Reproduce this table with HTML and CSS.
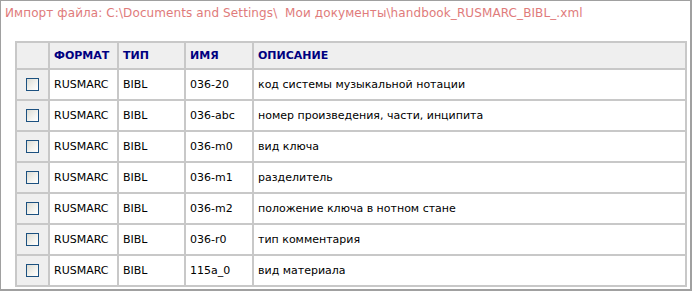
FILE: index.html
```html
<!DOCTYPE html>
<html lang="ru">
<head>
    <meta charset="UTF-8">
    <title>Импорт файла</title>
    <link rel="stylesheet" href="styles.css">
</head>
<body>

    <div class="import-panel">
        <div class="import-title">Импорт файла: C:\Documents and Settings\&nbsp; Мои документы\handbook_RUSMARC_BIBL_.xml</div>

        <table class="fields-table">
            <thead>
                <tr>
                    <th class="col-check"></th>
                    <th class="col-format">ФОРМАТ</th>
                    <th class="col-type">ТИП</th>
                    <th class="col-name">ИМЯ</th>
                    <th class="col-desc">ОПИСАНИЕ</th>
                </tr>
            </thead>
            <tbody>
                <tr>
                    <td class="col-check"><span class="checkbox"></span></td>
                    <td>RUSMARC</td>
                    <td>BIBL</td>
                    <td>036-20</td>
                    <td>код системы музыкальной нотации</td>
                </tr>
                <tr>
                    <td class="col-check"><span class="checkbox"></span></td>
                    <td>RUSMARC</td>
                    <td>BIBL</td>
                    <td>036-abc</td>
                    <td>номер произведения, части, инципита</td>
                </tr>
                <tr>
                    <td class="col-check"><span class="checkbox"></span></td>
                    <td>RUSMARC</td>
                    <td>BIBL</td>
                    <td>036-m0</td>
                    <td>вид ключа</td>
                </tr>
                <tr>
                    <td class="col-check"><span class="checkbox"></span></td>
                    <td>RUSMARC</td>
                    <td>BIBL</td>
                    <td>036-m1</td>
                    <td>разделитель</td>
                </tr>
                <tr>
                    <td class="col-check"><span class="checkbox"></span></td>
                    <td>RUSMARC</td>
                    <td>BIBL</td>
                    <td>036-m2</td>
                    <td>положение ключа в нотном стане</td>
                </tr>
                <tr>
                    <td class="col-check"><span class="checkbox"></span></td>
                    <td>RUSMARC</td>
                    <td>BIBL</td>
                    <td>036-r0</td>
                    <td>тип комментария</td>
                </tr>
                <tr>
                    <td class="col-check"><span class="checkbox"></span></td>
                    <td>RUSMARC</td>
                    <td>BIBL</td>
                    <td>115a_0</td>
                    <td>вид материала</td>
                </tr>
            </tbody>
        </table>
    </div>

</body>
</html>
```

FILE: styles.css
```css
/* General reset */
* {
    margin: 0;
    padding: 0;
    box-sizing: border-box;
}

body {
    background: #ffffff;
    font-family: "DejaVu Sans", Verdana, sans-serif;
    font-size: 11px;
    color: #000000;
}

/* Outer frame */
.import-panel {
    width: 692px;
    height: 291px;
    border: 1px solid #a0a0a0;
    border-right-width: 2px;
    border-bottom-width: 2px;
    overflow: hidden;
}

.import-title {
    color: #e07b7b;
    font-size: 12px;
    letter-spacing: 0.1px;
    line-height: 16px;
    padding: 4px 0 0 4px;
    height: 40px; /* table starts right under */
    white-space: nowrap;
}

/* Fields table */
.fields-table {
    margin-left: 14px;
    width: 672px;
    table-layout: fixed;
    border-collapse: separate;
    border-spacing: 0;
    border-top: 2px solid #c8c8c8;
    border-left: 2px solid #c8c8c8;
}

.fields-table th,
.fields-table td {
    border-right: 2px solid #c8c8c8;
    border-bottom: 2px solid #c8c8c8;
    padding: 0 0 0 4px;
    text-align: left;
    vertical-align: middle;
    white-space: nowrap;
    overflow: hidden;
}

.fields-table th {
    height: 27px;
    background: #efefef;
    color: #000080;
    font-weight: bold;
}

.fields-table td {
    height: 31px;
}

.col-check { width: 33px; }
.col-format { width: 69px; }
.col-type { width: 67px; }
.col-name { width: 68px; }
.col-desc { width: 433px; }

.fields-table td.col-check {
    background: #efefef;
    padding: 0;
    text-align: center;
}

/* XP-style checkbox */
.checkbox {
    display: inline-block;
    width: 13px;
    height: 13px;
    margin: 3px 1px 0 0;
    border: 1px solid #1c5180;
    background: linear-gradient(135deg, #dcdcd4 0%, #f4f4f0 60%, #ffffff 100%);
}
```
